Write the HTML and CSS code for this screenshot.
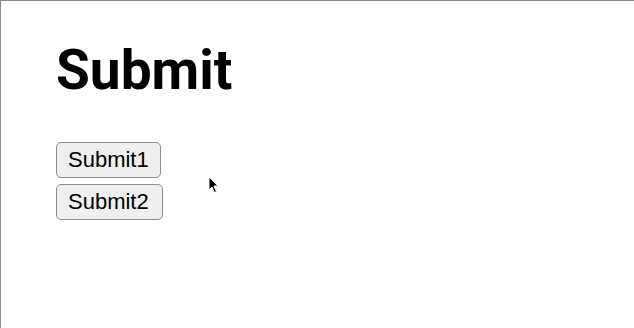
FILE: index.html
```html
<!DOCTYPE html>
<html lang="en">
<head>
    <meta charset="UTF-8">
    <meta name="viewport" content="width=device-width, initial-scale=1.0">
    <title>Submit</title>
    <link rel="stylesheet" href="styles.css">
</head>
<body>
    <div class="page">
        <h1 class="title">Submit</h1>
        <div class="buttons">
            <button class="btn">Submit1</button>
            <button class="btn">Submit2</button>
        </div>
        <svg class="cursor" width="12" height="18" viewBox="0 0 12 18">
            <path d="M1 1 L1 14 L4 11 L6.5 16.5 L8.5 15.5 L6 10 L10 10 Z" fill="#000" stroke="#fff" stroke-width="1"/>
        </svg>
    </div>
</body>
</html>
```

FILE: styles.css
```css
html, body {
    margin: 0;
    height: 100%;
    background-color: white;
}
.page {
    box-sizing: border-box;
    height: 100%;
    border-top: 1px solid #8a8a8a;
    border-left: 1px solid #8a8a8a;
    padding: 0 0 0 55px;
    position: relative;
}
.title {
    font-family: 'Roboto', sans-serif;
    font-weight: 700;
    font-size: 55px;
    margin: 0;
    padding-top: 38px;
    line-height: 63px;
    color: #000;
}
.buttons {
    display: flex;
    flex-direction: column;
    align-items: flex-start;
    gap: 6px;
    margin-top: 40px;
}
.btn {
    font-family: 'Liberation Sans', Arial, sans-serif;
    font-size: 22px;
    line-height: 26px;
    padding: 4px 11px;
    color: #000;
    background-color: #efefef;
    border: 1px solid #8d8d8d;
    border-radius: 5px;
}
.btn + .btn {
    padding-right: 13px;
}
.cursor {
    position: absolute;
    left: 207px;
    top: 175px;
}
```
